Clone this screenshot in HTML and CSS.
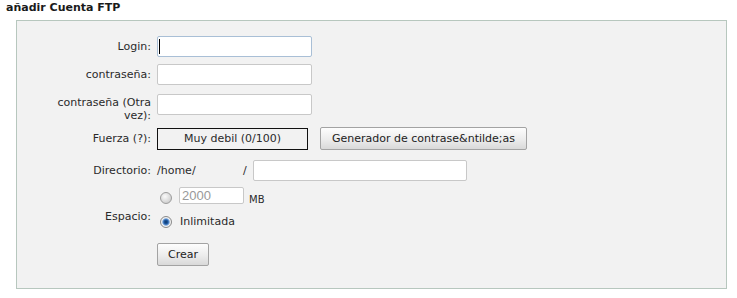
FILE: index.html
```html
<!DOCTYPE html>
<html lang="es">
<head>
    <meta charset="UTF-8">
    <meta name="viewport" content="width=device-width, initial-scale=1.0">
    <title>añadir Cuenta FTP</title>
    <link rel="stylesheet" href="styles.css">
</head>
<body>
<h3 class="title">añadir Cuenta FTP</h3>
<div class="box">
    <form class="ftp-form" action="#" method="POST">
        <div class="row">
            <label for="login" class="lbl">Login:</label>
            <span class="field-wrap">
                <input type="text" id="login" name="login" class="txt focused">
                <span class="caret"></span>
            </span>
        </div>

        <div class="row row-pass">
            <label for="pass" class="lbl">contraseña:</label>
            <input type="password" id="pass" name="pass" class="txt">
        </div>

        <div class="row row-pass2">
            <label for="pass2" class="lbl">contraseña (Otra vez):</label>
            <input type="password" id="pass2" name="pass2" class="txt">
        </div>

        <div class="row row-strength">
            <span class="lbl">Fuerza (<a href="#" class="help">?</a>):</span>
            <div class="strength">Muy debil (0/100)</div>
            <button type="button" class="btn btn-gen">Generador de contrase&amp;ntilde;as</button>
        </div>

        <div class="row row-dir">
            <label for="dir" class="lbl">Directorio:</label>
            <span class="home">/home/</span>
            <span class="slash">/</span>
            <input type="text" id="dir" name="dir" class="txt txt-dir">
        </div>

        <div class="row row-space">
            <span class="lbl lbl-space">Espacio:</span>
            <div class="space-opts">
                <div class="opt opt-quota">
                    <input type="radio" name="quota" class="radio radio-quota">
                    <input type="text" name="quota_mb" class="txt-mb" value="2000">
                    <span class="unit">MB</span>
                </div>
                <div class="opt opt-unlim">
                    <input type="radio" name="quota" class="radio" checked>
                    <span>Inlimitada</span>
                </div>
            </div>
        </div>

        <div class="row row-submit">
            <span class="lbl"></span>
            <button type="submit" class="btn btn-create">Crear</button>
        </div>
    </form>
</div>
</body>
</html>
```

FILE: styles.css
```css
body {
    margin: 0;
    font-family: "DejaVu Sans", Verdana, sans-serif;
    font-size: 11px;
    color: #2a2a2a;
    background: #fff;
}
.title {
    margin: 1px 0 6px 6px;
    font-size: 11px;
    line-height: 13px;
    font-weight: bold;
    color: #1a1a1a;
}
.box {
    margin-left: 16px;
    width: 709px;
    background: #f2f2f2;
    border: 1px solid #b7c7be;
}
.ftp-form {
    padding: 15px 0 22px 36px;
}
.row {
    display: flex;
    align-items: center;
}
.lbl {
    flex-shrink: 0;
    width: 98px;
    margin-right: 6px;
    text-align: right;
    line-height: 13px;
}
.help {
    color: #2a2a2a;
    text-decoration: none;
}
.txt {
    box-sizing: border-box;
    width: 155px;
    height: 21px;
    margin: 0;
    padding: 0 3px;
    border: 1px solid #c8c8c8;
    border-radius: 2px;
    background: #fff;
    font-family: "DejaVu Sans", Verdana, sans-serif;
    font-size: 11px;
    outline: none;
}
.txt.focused {
    border-color: #a9bfd6;
}
.field-wrap {
    position: relative;
    display: inline-block;
    height: 21px;
}
.caret {
    position: absolute;
    left: 2px;
    top: 3px;
    width: 1px;
    height: 15px;
    background: #000;
}
.row-pass { margin-top: 7px; }
.row-pass2 {
    margin-top: 9px;
    align-items: flex-start;
}
.row-pass2 .lbl { margin-top: 2px; }

.row-strength { margin-top: 5px; }
.strength {
    box-sizing: border-box;
    width: 151px;
    height: 22px;
    margin-right: 12px;
    border: 1px solid #111;
    line-height: 20px;
    text-align: center;
}
.btn {
    box-sizing: border-box;
    height: 23px;
    margin: 0;
    padding: 0;
    border: 1px solid #a3a3a3;
    border-radius: 2px;
    background: linear-gradient(#fdfdfd, #ececec 55%, #d9d9d9);
    color: #222;
    font-family: "DejaVu Sans", Verdana, sans-serif;
    font-size: 11px;
    cursor: pointer;
}
.btn-gen { width: 207px; }
.btn-create { width: 52px; }

.row-dir { margin-top: 10px; }
.home { width: 86px; }
.txt-dir {
    width: 214px;
    margin-left: 6px;
}

.row-space {
    margin-top: 5px;
    align-items: flex-start;
}
.lbl-space { margin-top: 24px; }
.opt {
    display: flex;
    align-items: flex-start;
}
.opt-quota {
    margin-top: 1px;
    height: 17px;
}
.radio {
    appearance: none;
    -webkit-appearance: none;
    box-sizing: border-box;
    flex-shrink: 0;
    width: 12px;
    height: 12px;
    margin: 0 8px 0 3px;
    border: 1px solid #9c9c9c;
    border-radius: 50%;
    background: radial-gradient(circle at 40% 35%, #fafafa 0, #dedede 50%, #c2c2c2 100%);
}
.radio:checked {
    border-color: #8a8a8a;
    background: radial-gradient(circle at 50% 50%, #0c3566 0, #1f5aa3 2px, #6f9fd8 3.2px, #f4f4f4 4.2px, #dadada 100%);
}
.radio-quota {
    margin-top: 5px;
    margin-right: 7px;
}
.txt-mb {
    box-sizing: border-box;
    width: 65px;
    height: 17px;
    margin: 0;
    padding: 0 2px;
    border: 1px solid #c8c8c8;
    border-radius: 2px;
    background: #fff;
    color: #999;
    font-family: "Liberation Sans", Arial, sans-serif;
    font-size: 13px;
    outline: none;
}
.unit {
    margin: 8px 0 0 5px;
    font-size: 10px;
    line-height: 10px;
}
.opt-unlim {
    margin-top: 11px;
    height: 13px;
    align-items: center;
    line-height: 13px;
}

.row-submit { margin-top: 15px; }
```
